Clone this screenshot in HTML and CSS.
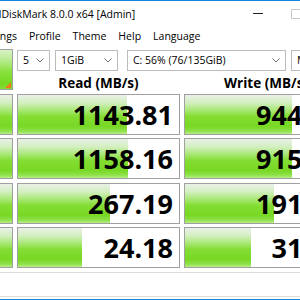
FILE: index.html
```html
<!DOCTYPE html>
<html lang="en">
<head>
    <meta charset="UTF-8">
    <title>CrystalDiskMark 8.0.0 x64 [Admin]</title>
    <link rel="stylesheet" href="styles.css">
</head>
<body>
    <div class="window">
        <!-- Barra de título -->
        <div class="titlebar">
            <span class="title">CrystalDiskMark 8.0.0 x64 [Admin]</span>
            <span class="win-btn min"></span>
            <span class="win-btn max"></span>
        </div>

        <!-- Menu -->
        <div class="menubar">
            <span class="menu first">Settings</span>
            <span class="menu">Profile</span>
            <span class="menu">Theme</span>
            <span class="menu">Help</span>
            <span class="menu">Language</span>
        </div>

        <div class="bench">
            <button class="test all">All</button>
            <div class="controls">
                <div class="selects">
                    <div class="select count">5<svg viewBox="0 0 8 5"><polyline points="0.5,0.5 4,4 7.5,0.5"/></svg></div>
                    <div class="select size">1GiB<svg viewBox="0 0 8 5"><polyline points="0.5,0.5 4,4 7.5,0.5"/></svg></div>
                    <div class="select drive">C: 56% (76/135GiB)<svg viewBox="0 0 8 5"><polyline points="0.5,0.5 4,4 7.5,0.5"/></svg></div>
                    <div class="select unit">MB/s<svg viewBox="0 0 8 5"><polyline points="0.5,0.5 4,4 7.5,0.5"/></svg></div>
                </div>
                <div class="headers">
                    <div>Read (MB/s)</div>
                    <div>Write (MB/s)</div>
                </div>
            </div>

            <button class="test">SEQ1M Q8T1</button>
            <div class="meter"><div class="fill" style="width:109px"></div><span class="value">1143.81</span></div>
            <div class="meter"><div class="fill" style="width:107px"></div><span class="value">944.85</span></div>

            <button class="test">SEQ1M Q1T1</button>
            <div class="meter"><div class="fill" style="width:110px"></div><span class="value">1158.16</span></div>
            <div class="meter"><div class="fill" style="width:107px"></div><span class="value">915.32</span></div>

            <button class="test">RND4K Q32T16</button>
            <div class="meter"><div class="fill" style="width:92px"></div><span class="value">267.19</span></div>
            <div class="meter"><div class="fill" style="width:89px"></div><span class="value">191.27</span></div>

            <button class="test">RND4K Q1T1</button>
            <div class="meter"><div class="fill" style="width:64px"></div><span class="value">24.18</span></div>
            <div class="meter"><div class="fill" style="width:66px"></div><span class="value">31.58</span></div>

            <div class="comment"></div>
        </div>
    </div>
</body>
</html>
```

FILE: styles.css
```css
html, body {
    margin: 0;
    height: 100%;
}

body {
    font-family: "Open Sans", "Noto Sans", sans-serif;
    background: #fff;
    color: #000;
    overflow: hidden;
}

/* Janela */
.window {
    width: 315px;
    height: 300px;
    box-sizing: border-box;
    border-top: 1px solid #1883d7;
    border-bottom: 1px solid #1883d7;
    display: flex;
    flex-direction: column;
}

.titlebar {
    height: 25px;
    flex-shrink: 0;
    display: flex;
    align-items: center;
    font-size: 10.5px;
}

.title {
    flex: 1;
    white-space: nowrap;
    margin-left: -32px; /* "Crystal" fica fora da captura */
}

.win-btn {
    width: 38px;
    height: 25px;
    flex-shrink: 0;
    display: flex;
    justify-content: center;
    align-items: center;
}

.win-btn.min::before {
    content: "";
    width: 10px;
    height: 1px;
    background: #222;
}

.win-btn.max::before {
    content: "";
    width: 8px;
    height: 8px;
    border: 1px solid #c8c8c8;
}

/* Menu */
.menubar {
    height: 20px;
    flex-shrink: 0;
    display: flex;
    align-items: center;
    font-size: 10.5px;
    white-space: nowrap;
}

.menu {
    padding: 0 6px;
}

.menu.first {
    margin-left: -28px;
}

/* Área principal */
.bench {
    display: grid;
    grid-template-columns: 70px 163px 164px;
    grid-template-rows: repeat(5, 41px) auto;
    column-gap: 4px;
    row-gap: 3.5px;
    margin-left: -57px;
    padding-top: 3px;
}

.test {
    margin: 0;
    padding: 0 15px 0 0;
    border: 1px solid #a0a0a0;
    font-family: inherit;
    font-size: 10px;
    line-height: 12px;
    text-align: right;
    color: #2c5c8c;
    background: linear-gradient(to bottom, #eaf0e8 0%, #d3efc0 20%, #a2e66a 42%, #84dd33 55%, #78d824 80%, #8ee048 92%, #b6ee88 100%);
    overflow: hidden;
}

.test.all {
    position: relative;
    text-align: center;
    padding: 0;
    color: #000;
    background: linear-gradient(to bottom, #d8f2c6 0%, #b2ea86 30%, #8ae03e 55%, #74d820 85%, #84dc36 100%);
}

.test.all::after {
    content: "";
    position: absolute;
    right: 1px;
    bottom: 1px;
    border-left: 6px solid transparent;
    border-bottom: 6px solid #f07a1a;
}

.controls {
    grid-column: 2 / 4;
    overflow: visible;
}

.selects {
    display: flex;
    margin-top: 1px;
    white-space: nowrap;
}

.select {
    height: 21px;
    box-sizing: border-box;
    border: 1px solid #bcbcbc;
    background: #fff;
    font-size: 10.5px;
    line-height: 19px;
    padding-left: 5px;
    display: flex;
    align-items: center;
    justify-content: space-between;
    flex-shrink: 0;
}

.select svg {
    width: 8px;
    height: 5px;
    margin-right: 5px;
    fill: none;
    stroke: #707070;
    stroke-width: 1;
}

.select.count { width: 33px; margin-right: 5px; }
.select.size { width: 63px; margin-right: 9px; }
.select.drive { width: 159px; margin-right: 5px; }
.select.unit { width: 60px; }

.headers {
    display: grid;
    grid-template-columns: 163px 164px;
    column-gap: 4px;
    margin-top: 4px;
    font-size: 13.5px;
    font-weight: 700;
    line-height: 16px;
    text-align: center;
    white-space: nowrap;
}

/* Medidores */
.meter {
    display: grid;
    border: 1px solid #a0a0a0;
    background: #fff;
}

.fill {
    grid-area: 1 / 1;
    height: 100%;
    background: linear-gradient(to bottom, #eaf0e8 0%, #d3efc0 20%, #a2e66a 42%, #84dd33 55%, #78d824 80%, #8ee048 92%, #b6ee88 100%);
}

.value {
    grid-area: 1 / 1;
    justify-self: end;
    align-self: center;
    padding-right: 6px;
    font-size: 27px;
    font-weight: 700;
    line-height: 1;
    white-space: nowrap;
}

.comment {
    grid-column: 1 / -1;
    height: 25px;
    border: 1px solid #dcdcdc;
    box-sizing: border-box;
}
```
